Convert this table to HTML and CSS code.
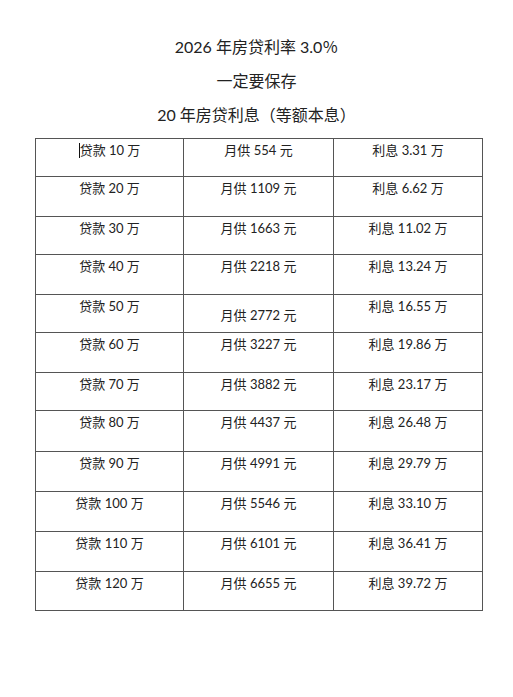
FILE: index.html
```html
<!DOCTYPE html>
<html lang="zh-CN">
<head>
<meta charset="utf-8">
<link rel="stylesheet" href="styles.css">
</head>
<body>
<div class="page">
  <div class="titles">
    <p class="title">2026 年房贷利率 3.0％</p>
    <p class="title">一定要保存</p>
    <p class="title">20 年房贷利息（等额本息）</p>
  </div>
  <table class="loan">
    <tr><td><span class="caret"></span>贷款 10 万</td><td>月供 554 元</td><td>利息 3.31 万</td></tr>
    <tr><td>贷款 20 万</td><td>月供 1109 元</td><td>利息 6.62 万</td></tr>
    <tr><td>贷款 30 万</td><td>月供 1663 元</td><td>利息 11.02 万</td></tr>
    <tr><td>贷款 40 万</td><td>月供 2218 元</td><td>利息 13.24 万</td></tr>
    <tr><td>贷款 50 万</td><td class="low">月供 2772 元</td><td>利息 16.55 万</td></tr>
    <tr><td>贷款 60 万</td><td>月供 3227 元</td><td>利息 19.86 万</td></tr>
    <tr><td>贷款 70 万</td><td>月供 3882 元</td><td>利息 23.17 万</td></tr>
    <tr><td>贷款 80 万</td><td>月供 4437 元</td><td>利息 26.48 万</td></tr>
    <tr><td>贷款 90 万</td><td>月供 4991 元</td><td>利息 29.79 万</td></tr>
    <tr><td>贷款 100 万</td><td>月供 5546 元</td><td>利息 33.10 万</td></tr>
    <tr><td>贷款 110 万</td><td>月供 6101 元</td><td>利息 36.41 万</td></tr>
    <tr><td>贷款 120 万</td><td>月供 6655 元</td><td>利息 39.72 万</td></tr>
  </table>
</div>
</body>
</html>
```

FILE: styles.css
```css
html, body {
  margin: 0;
  padding: 0;
  background: #ffffff;
}

body {
  font-family: Lato, "Noto Sans CJK SC", sans-serif;
  color: #222222;
}

.page {
  width: 513px;
  padding-top: 30px;
}

.titles {
  margin-bottom: 6px;
}

.title {
  margin: 0;
  text-align: center;
  font-size: 16px;
  line-height: 34px;
}

.loan {
  margin-left: 35px;
  width: 447px;
  border-collapse: collapse;
  table-layout: fixed;
  font-size: 13px;
}

.loan td {
  border: 1px solid #555555;
  text-align: center;
  vertical-align: top;
  padding: 2px 0 0 0;
  line-height: 18px;
  height: 39px;
  box-sizing: border-box;
}

.loan td:nth-child(1) { width: 148px; }
.loan td:nth-child(2) { width: 150px; }
.loan td:nth-child(3) { width: 149px; }

.loan tr:nth-child(1) td,
.loan tr:nth-child(3) td,
.loan tr:nth-child(5) td,
.loan tr:nth-child(7) td { height: 38px; }
.loan tr:nth-child(2) td,
.loan tr:nth-child(4) td,
.loan tr:nth-child(6) td,
.loan tr:nth-child(9) td,
.loan tr:nth-child(10) td,
.loan tr:nth-child(11) td { height: 40px; }
.loan tr:nth-child(8) td { height: 41px; }

.loan td.low {
  padding-top: 11px;
}

.caret {
  display: inline-block;
  width: 0;
  height: 15px;
  border-left: 1.5px solid #111111;
  vertical-align: -3px;
}
```
